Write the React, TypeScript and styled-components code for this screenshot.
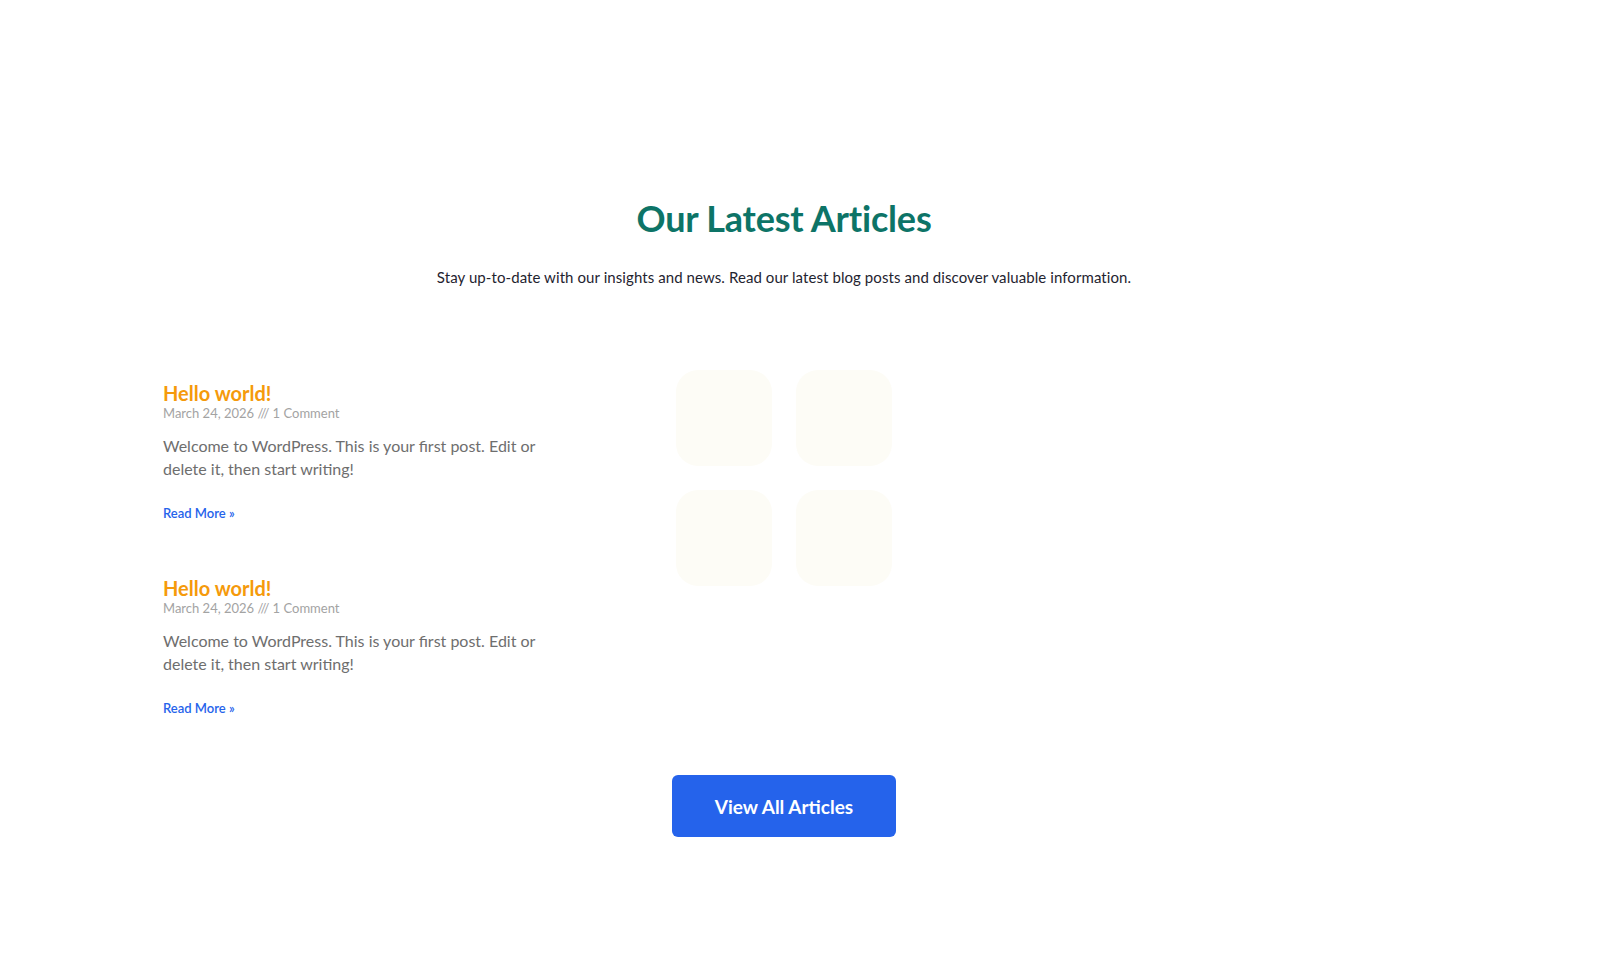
import React from "react";
import styled, { createGlobalStyle } from "styled-components";

const Global = createGlobalStyle`
  html, body { margin: 0; padding: 0; background: #ffffff; }
  body { font-family: Lato, "Open Sans", sans-serif; }
  * { box-sizing: border-box; }
`;

const Page = styled.div`
  width: 1568px;
  padding: 196px 0 141px;
  display: flex;
  flex-direction: column;
  align-items: center;
`;

const Heading = styled.h2`
  margin: 0;
  font-size: 36px;
  line-height: 44px;
  font-weight: 700;
  color: #0d7467;
  letter-spacing: -0.2px;
`;

const Subtitle = styled.p`
  margin: 26px 0 0;
  font-size: 15px;
  line-height: 22px;
  color: #1f2430;
  letter-spacing: 0.08px;
`;

const Container = styled.div`
  width: 1242px;
  margin-top: 82px;
  display: grid;
  grid-template-columns: repeat(3, 1fr);
`;

const PostList = styled.div`
  display: flex;
  flex-direction: column;
  gap: 55px;
  padding-top: 12px;
`;

const Post = styled.article`
  display: flex;
  flex-direction: column;
  max-width: 382px;
`;

const PostTitle = styled.h3`
  margin: 0;
  font-size: 20px;
  line-height: 22px;
  font-weight: 700;
  color: #f59a0b;
`;

const Meta = styled.div`
  font-size: 13px;
  line-height: 18px;
  color: #a3a3a3;
`;

const Excerpt = styled.p`
  margin: 12px 0 0;
  font-size: 16px;
  line-height: 23px;
  color: #6e6e6e;
`;

const ReadMore = styled.a`
  margin-top: 24px;
  font-size: 13px;
  line-height: 18px;
  font-weight: 600;
  color: #2563eb;
  text-decoration: none;
`;

const PlaceholderCol = styled.div`
  display: flex;
  justify-content: center;
`;

const Skeleton = styled.div`
  display: grid;
  grid-template-columns: repeat(2, 96px);
  grid-auto-rows: 96px;
  gap: 24px;
`;

const Tile = styled.div`
  background: #fdfcf6;
  border-radius: 22px;
`;

const Button = styled.a`
  margin-top: 58px;
  width: 224px;
  height: 62px;
  display: flex;
  align-items: center;
  justify-content: center;
  background: #2563eb;
  color: #ffffff;
  border-radius: 6px;
  font-size: 19px;
  font-weight: 700;
  text-decoration: none;
`;

const posts = [0, 1];

export default function App() {
  return (
    <>
      <Global />
      <Page>
        <Heading>Our Latest Articles</Heading>
        <Subtitle>
          Stay up-to-date with our insights and news. Read our latest blog posts and discover valuable information.
        </Subtitle>
        <Container>
          <PostList>
            {posts.map((i) => (
              <Post key={i}>
                <PostTitle>Hello world!</PostTitle>
                <Meta>March 24, 2026 /// 1 Comment</Meta>
                <Excerpt>
                  Welcome to WordPress. This is your first post. Edit or delete it, then start writing!
                </Excerpt>
                <ReadMore href="#">Read More »</ReadMore>
              </Post>
            ))}
          </PostList>
          <PlaceholderCol>
            <Skeleton>
              <Tile />
              <Tile />
              <Tile />
              <Tile />
            </Skeleton>
          </PlaceholderCol>
          <div />
        </Container>
        <Button href="#">View All Articles</Button>
      </Page>
    </>
  );
}
